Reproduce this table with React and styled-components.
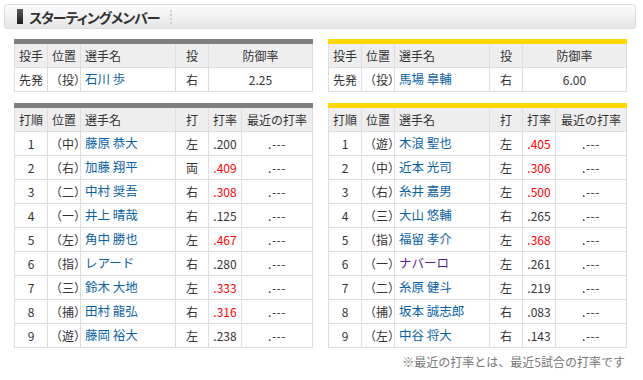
import React from "react";
import styled, { createGlobalStyle } from "styled-components";

const GlobalStyle = createGlobalStyle`
  body {
    margin: 0;
    background: #fff;
    font-family: "Noto Sans CJK JP", "Noto Sans", sans-serif;
    color: #333;
  }
`;

const Page = styled.div`
  width: 643px;
  height: 380px;
  padding-top: 4px;
  box-sizing: border-box;
`;

const TitleBar = styled.div`
  margin: 0 7px 0 4px;
  height: 25px;
  box-sizing: border-box;
  border: 1px solid #dcdcdc;
  border-radius: 3px;
  background: linear-gradient(#fbfbfb, #f1f1f1 50%, #e6e6e6);
  display: flex;
  align-items: center;
  padding-left: 12px;
  gap: 6px;
`;

const TitleMark = styled.span`
  width: 6px;
  height: 15px;
  background: linear-gradient(#5a5a5a, #1e1e1e);
`;

const TitleText = styled.span`
  font-size: 14px;
  font-weight: bold;
  color: #333;
  letter-spacing: -1px;
  font-feature-settings: "palt";
`;

const TitleSep = styled.span`
  width: 0;
  height: 14px;
  margin-left: 4px;
  border-left: 2px dotted #d0d0d0;
`;

const Columns = styled.div`
  display: grid;
  grid-template-columns: 299px 299px;
  column-gap: 15px;
  row-gap: 11px;
  padding: 10px 0 0 14px;
`;

const Table = styled.table`
  width: 299px;
  table-layout: fixed;
  border-collapse: collapse;
  border-top: 5px solid ${(p) => p.$accent};
  font-size: 12px;
`;

const Th = styled.th`
  height: 23px;
  padding: 0 0 0 ${(p) => (p.$align === "left" ? "4px" : "0")};
  border: 1px solid #dedede;
  background: #eeeeee;
  font-weight: normal;
  text-align: ${(p) => p.$align || "center"};
  color: #333;
  white-space: nowrap;
  line-height: 1;
`;

const Td = styled.td`
  height: 23px;
  padding: 0 0 0 ${(p) => (p.$align === "left" ? "4px" : "0")};
  border: 1px solid #dedede;
  text-align: ${(p) => p.$align || "center"};
  color: #333;
  white-space: nowrap;
  line-height: 1;
`;

const Pos = styled.span`
  margin-left: -2px;
`;

const Name = styled.span`
  color: ${(p) => (p.$visited ? "#5a1d8f" : "#0b61a4")};
  font-size: 12.5px;
`;

const Avg = styled.span`
  color: ${(p) => (p.$hot ? "#ff0000" : "#333")};
`;

const Recent = styled.span`
  letter-spacing: 0.5px;
`;

const Note = styled.div`
  grid-column: 1 / span 2;
  text-align: right;
  font-size: 12px;
  color: #777;
  margin-top: -6px;
  padding-right: 2px;
`;

const pitchers = {
  left: { name: "石川 歩", hand: "右", era: "2.25" },
  right: { name: "馬場 皐輔", hand: "右", era: "6.00" },
};

const batters = {
  left: [
    ["1", "中", "藤原 恭大", "左", ".200"],
    ["2", "右", "加藤 翔平", "両", ".409", true],
    ["3", "二", "中村 奨吾", "右", ".308", true],
    ["4", "一", "井上 晴哉", "右", ".125"],
    ["5", "左", "角中 勝也", "左", ".467", true],
    ["6", "指", "レアード", "右", ".280"],
    ["7", "三", "鈴木 大地", "左", ".333", true],
    ["8", "捕", "田村 龍弘", "右", ".316", true],
    ["9", "遊", "藤岡 裕大", "左", ".238"],
  ],
  right: [
    ["1", "遊", "木浪 聖也", "左", ".405", true],
    ["2", "中", "近本 光司", "左", ".306", true],
    ["3", "右", "糸井 嘉男", "左", ".500", true],
    ["4", "三", "大山 悠輔", "右", ".265"],
    ["5", "指", "福留 孝介", "左", ".368", true],
    ["6", "一", "ナバーロ", "左", ".261", false, true],
    ["7", "二", "糸原 健斗", "左", ".219"],
    ["8", "捕", "坂本 誠志郎", "右", ".083"],
    ["9", "左", "中谷 将大", "右", ".143"],
  ],
};

const PitcherTable = ({ accent, p }) => (
  <Table $accent={accent}>
    <colgroup>
      <col style={{ width: 33 }} />
      <col style={{ width: 33 }} />
      <col style={{ width: 95 }} />
      <col style={{ width: 33 }} />
      <col />
    </colgroup>
    <thead>
      <tr>
        <Th $align="left">投手</Th>
        <Th $align="left">位置</Th>
        <Th $align="left">選手名</Th>
        <Th>投</Th>
        <Th>防御率</Th>
      </tr>
    </thead>
    <tbody>
      <tr>
        <Td $align="left">先発</Td>
        <Td $align="left">
          <Pos>（投）</Pos>
        </Td>
        <Td $align="left">
          <Name>{p.name}</Name>
        </Td>
        <Td>{p.hand}</Td>
        <Td>{p.era}</Td>
      </tr>
    </tbody>
  </Table>
);

const BatterTable = ({ accent, rows }) => (
  <Table $accent={accent}>
    <colgroup>
      <col style={{ width: 33 }} />
      <col style={{ width: 33 }} />
      <col style={{ width: 95 }} />
      <col style={{ width: 33 }} />
      <col style={{ width: 33 }} />
      <col />
    </colgroup>
    <thead>
      <tr>
        <Th $align="left">打順</Th>
        <Th $align="left">位置</Th>
        <Th $align="left">選手名</Th>
        <Th>打</Th>
        <Th>打率</Th>
        <Th>最近の打率</Th>
      </tr>
    </thead>
    <tbody>
      {rows.map(([order, pos, name, hand, avg, hot, visited]) => (
        <tr key={order}>
          <Td>{order}</Td>
          <Td $align="left">
            <Pos>（{pos}）</Pos>
          </Td>
          <Td $align="left">
            <Name $visited={visited}>{name}</Name>
          </Td>
          <Td>{hand}</Td>
          <Td>
            <Avg $hot={hot}>{avg}</Avg>
          </Td>
          <Td>
            <Recent>.---</Recent>
          </Td>
        </tr>
      ))}
    </tbody>
  </Table>
);

export default function App() {
  return (
    <Page>
      <GlobalStyle />
      <TitleBar>
        <TitleMark />
        <TitleText>スターティングメンバー</TitleText>
        <TitleSep />
      </TitleBar>
      <Columns>
        <PitcherTable accent="#7f7f7f" p={pitchers.left} />
        <PitcherTable accent="#ffd700" p={pitchers.right} />
        <BatterTable accent="#7f7f7f" rows={batters.left} />
        <BatterTable accent="#ffd700" rows={batters.right} />
        <Note>※最近の打率とは、最近5試合の打率です</Note>
      </Columns>
    </Page>
  );
}
